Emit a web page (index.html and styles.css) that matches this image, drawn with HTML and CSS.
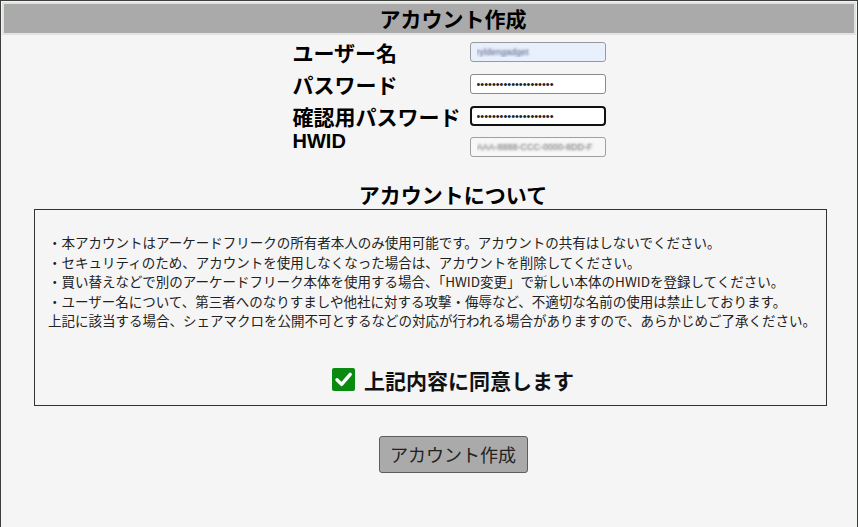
FILE: index.html
```html
<!DOCTYPE html>
<html lang="ja">
<head>
<meta charset="utf-8">
<title>アカウント作成</title>
<link rel="stylesheet" href="styles.css">
</head>
<body>
<div class="window">
  <header class="titlebar"><h1 class="title">アカウント作成</h1></header>
  <main class="content">
    <form class="form">
      <label class="label" for="user">ユーザー名</label>
      <input class="input input-autofill" id="user" type="text" value="ryldengadget">
      <label class="label" for="pw">パスワード</label>
      <input class="input" id="pw" type="password" value="abcdefghijklmnopqrst">
      <label class="label" for="pw2">確認用パスワード</label>
      <input class="input input-focus" id="pw2" type="password" value="abcdefghijklmnopqrst">
      <label class="label label-latin" for="hwid">HWID</label>
      <input class="input input-readonly" id="hwid" type="text" value="AAA-8888-CCC-0000-8DD-F" readonly>
    </form>

    <h2 class="section-title">アカウントについて</h2>

    <section class="terms">
      <p class="terms-text">・本アカウントはアーケードフリークの所有者本人のみ使用可能です。アカウントの共有はしないでください。<br>・セキュリティのため、アカウントを使用しなくなった場合は、アカウントを削除してください。<br>・買い替えなどで別のアーケードフリーク本体を使用する場合、「HWID変更」で新しい本体のHWIDを登録してください。<br>・ユーザー名について、第三者へのなりすましや他社に対する攻撃・侮辱など、不適切な名前の使用は禁止しております。<br>上記に該当する場合、シェアマクロを公開不可とするなどの対応が行われる場合がありますので、あらかじめご了承ください。</p>
      <div class="agree">
        <svg class="agree-box" width="23" height="23" viewBox="0 0 23 23" aria-hidden="true">
          <rect x="0" y="0" width="23" height="23" rx="2" fill="#0b8a12"/>
          <path d="M5 11.8 L9.6 16.4 L18.2 6.4" fill="none" stroke="#ffffff" stroke-width="3.4" stroke-linecap="round" stroke-linejoin="round"/>
        </svg>
        <span class="agree-text">上記内容に同意します</span>
      </div>
    </section>

    <div class="actions">
      <button class="submit" type="button">アカウント作成</button>
    </div>
  </main>
</div>
</body>
</html>
```

FILE: styles.css
```css
* {
  box-sizing: border-box;
}

html,
body {
  margin: 0;
  padding: 0;
}

body {
  background: #f5f5f5;
  font-family: "Noto Sans CJK JP", "Noto Sans", sans-serif;
  color: #111;
}

.window {
  height: 527px;
  border: 1px solid #3a3f3a;
  border-bottom: none;
  background: #f5f5f5;
}

.titlebar {
  margin: 1px 1px 0;
  border: 2px solid #e2e2e2;
  background: #aaaaaa;
}

.title {
  margin: 0;
  padding-left: 48px;
  font-size: 21px;
  font-weight: bold;
  line-height: 29px;
  text-align: center;
  color: #000;
}

.form {
  display: grid;
  grid-template-columns: auto 136px;
  grid-template-rows: 32px 32px 32px 29px;
  column-gap: 9px;
  justify-content: center;
  align-items: center;
  margin: 1px 0 0;
  padding-left: 40px;
}

.label {
  font-size: 21px;
  font-weight: bold;
  line-height: 1;
  color: #000;
}

.label-latin {
  align-self: start;
  font-family: "Liberation Sans", "Noto Sans CJK JP", sans-serif;
  font-size: 20px;
  line-height: 19px;
}

.input {
  width: 136px;
  height: 20px;
  margin: 0;
  padding: 0 6px;
  border: 1px solid #8a8a8a;
  border-radius: 3px;
  background: #ffffff;
  font-family: "Liberation Sans", sans-serif;
  font-size: 11px;
  color: #222;
  outline: none;
}

.input-autofill {
  background: #e8f0fe;
  border-color: #9a9a9a;
  color: transparent;
  text-shadow: 0 0 2.5px rgba(70, 80, 110, 0.95);
  font-size: 9px;
}

.input-focus {
  border: 2px solid #111;
  border-radius: 4px;
  padding: 0 5px;
}

.input-readonly {
  background: #f7f7f7;
  border-color: #a0a0a0;
  color: transparent;
  text-shadow: 0 0 2.5px rgba(90, 90, 90, 0.95);
  font-size: 9px;
}

.section-title {
  margin: 18px 0 0;
  padding-left: 48px;
  font-size: 21px;
  font-weight: bold;
  line-height: 30px;
  text-align: center;
  color: #000;
}

.terms {
  margin: 0 30px 0 33px;
  padding: 23px 12px 10px 13px;
  border: 1px solid #333;
}

.terms-text {
  margin: 0;
  font-size: 13.5px;
  line-height: 19.5px;
  color: #222;
  white-space: nowrap;
}

.agree {
  display: flex;
  align-items: center;
  justify-content: center;
  gap: 9px;
  height: 30px;
  margin-top: 34px;
  padding-left: 44px;
}

.agree-box {
  flex: none;
  display: block;
}

.agree-text {
  font-size: 21px;
  font-weight: bold;
  line-height: 30px;
  color: #111;
}

.actions {
  margin-top: 30px;
  padding-left: 48px;
  text-align: center;
}

.submit {
  width: 149px;
  height: 37px;
  padding: 0;
  border: 1px solid #5e5e5e;
  border-radius: 3px;
  background: #aaaaaa;
  font-family: "Noto Sans CJK JP", "Noto Sans", sans-serif;
  font-size: 18px;
  color: #222;
}
```
